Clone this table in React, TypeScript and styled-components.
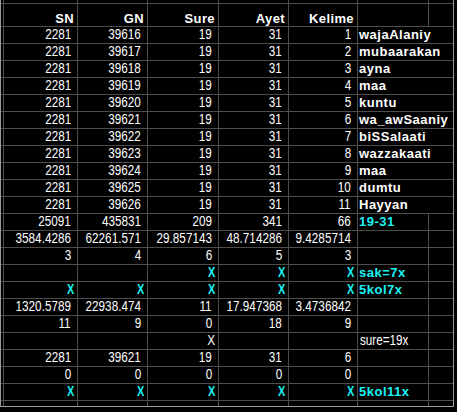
import { FC } from "react";
import styled, { createGlobalStyle, css } from "styled-components";

const LINE = "#4d4d4d";
const FRAME = "#9a9a9a";
const CYAN = "#19f4f4";
const SANS = `"Liberation Sans", Arial, sans-serif`;

// a sliver of the row-header column, 6 numeric columns, the note column, a cut-off column
const COLUMNS = "2px 73px 69px 70px 69px 68px 70px 24px";
// cut-off top row, header, 11 word rows, 11 summary rows, cut-off bottom row
const ROWS = "3px 22px repeat(22, 16px) 5px";

const WORDS = [
  "wajaAlaniy",
  "mubaarakan",
  "ayna",
  "maa",
  "kuntu",
  "wa_awSaaniy",
  "biSSalaati",
  "wazzakaati",
  "maa",
  "dumtu",
  "Hayyan",
];

type Tone = "cyan" | "plain";

interface Summary {
  cells: string[];
  note?: string;
  tone?: Tone;
}

const SUMMARY: Summary[] = [
  { cells: ["25091", "435831", "209", "341", "66"], note: "19-31", tone: "cyan" },
  { cells: ["3584.4286", "62261.571", "29.857143", "48.714286", "9.4285714"] },
  { cells: ["3", "4", "6", "5", "3"] },
  { cells: ["", "", "X", "X", "X"], note: "sak=7x", tone: "cyan" },
  { cells: ["X", "X", "X", "X", "X"], note: "5kol7x", tone: "cyan" },
  { cells: ["1320.5789", "22938.474", "11", "17.947368", "3.4736842"] },
  { cells: ["11", "9", "0", "18", "9"] },
  { cells: ["", "", "X", "", ""], note: "sure=19x", tone: "plain" },
  { cells: ["2281", "39621", "19", "31", "6"] },
  { cells: ["0", "0", "0", "0", "0"] },
  { cells: ["X", "X", "X", "X", "X"], note: "5kol11x", tone: "cyan" },
];

const GlobalStyle = createGlobalStyle`
  html, body {
    margin: 0;
    background: #000;
  }
`;

const Sheet = styled.div`
  display: grid;
  grid-template-columns: ${COLUMNS};
  grid-template-rows: ${ROWS};
  gap: 1px;
  width: fit-content;
  background: ${LINE};
  border-left: 1px solid ${FRAME};
  border-right: 1px solid ${FRAME};
  border-bottom: 1px solid ${FRAME};
`;

const Blank = styled.div`
  background: #000;
`;

const baseCell = css`
  display: flex;
  align-items: flex-end;
  background: #000;
  white-space: nowrap;
  overflow: visible;
  color: #fff;
`;

// no narrow face installed: squeeze the regular one to the look of Arial Narrow
const Squeeze = styled.span<{ $from: "left" | "right" }>`
  display: inline-block;
  transform: scaleX(0.78);
  transform-origin: ${({ $from }) => $from} bottom;
`;

const HeadCell = styled.div`
  ${baseCell};
  justify-content: flex-end;
  padding: 0 3px 0 0;
  font: bold 13px/15px ${SANS};
  letter-spacing: 0.4px;
`;

const NumCell = styled.div`
  ${baseCell};
  justify-content: flex-end;
  padding: 0 6px 1px 0;
  font: 15px/16px ${SANS};
`;

const MarkCell = styled.div<{ $tone: Tone }>`
  ${baseCell};
  justify-content: flex-end;
  padding: 0 3px 1px 0;
  ${({ $tone }) =>
    $tone === "cyan"
      ? css`
          color: ${CYAN};
          font: bold 14px/15px ${SANS};
        `
      : css`
          font: 15px/16px ${SANS};
        `}
`;

const WordCell = styled.div`
  ${baseCell};
  grid-column: span 2;
  padding: 0 0 1px 1px;
  font: bold 13px/15px ${SANS};
  letter-spacing: 0.5px;
`;

const NoteCell = styled.div<{ $tone?: Tone }>`
  ${baseCell};
  padding: 0 0 1px 1px;
  ${({ $tone }) =>
    $tone === "plain"
      ? css`
          padding-left: 2px;
          font: 15px/16px ${SANS};
        `
      : css`
          color: ${CYAN};
          font: bold 13px/15px ${SANS};
          letter-spacing: 0.5px;
        `}
`;

const EmptyRow: FC = () => (
  <>
    {Array.from({ length: 8 }, (_, i) => (
      <Blank key={i} />
    ))}
  </>
);

const Num: FC<{ value: string | number }> = ({ value }) => (
  <NumCell>
    <Squeeze $from="right">{value}</Squeeze>
  </NumCell>
);

const App: FC = () => {
  return (
    <>
      <GlobalStyle />
      <Sheet>
        <EmptyRow />

        <Blank />
        {["SN", "GN", "Sure", "Ayet", "Kelime"].map((h) => (
          <HeadCell key={h}>{h}</HeadCell>
        ))}
        <Blank />
        <Blank />

        {WORDS.map((word, i) => (
          <div key={`d${i}`} style={{ display: "contents" }}>
            <Blank />
            <Num value={2281} />
            <Num value={39616 + i} />
            <Num value={19} />
            <Num value={31} />
            <Num value={i + 1} />
            <WordCell>{word}</WordCell>
          </div>
        ))}

        {SUMMARY.map((row, r) => (
          <div key={`s${r}`} style={{ display: "contents" }}>
            <Blank />
            {row.cells.map((v, c) => {
              if (v === "") return <Blank key={c} />;
              if (v !== "X") return <Num key={c} value={v} />;
              const tone = row.tone === "plain" ? "plain" : "cyan";
              return (
                <MarkCell key={c} $tone={tone}>
                  <Squeeze $from="right">X</Squeeze>
                </MarkCell>
              );
            })}
            <NoteCell $tone={row.tone}>
              {row.tone === "plain" ? <Squeeze $from="left">{row.note}</Squeeze> : row.note}
            </NoteCell>
            <Blank />
          </div>
        ))}

        <EmptyRow />
      </Sheet>
    </>
  );
};

export default App;
